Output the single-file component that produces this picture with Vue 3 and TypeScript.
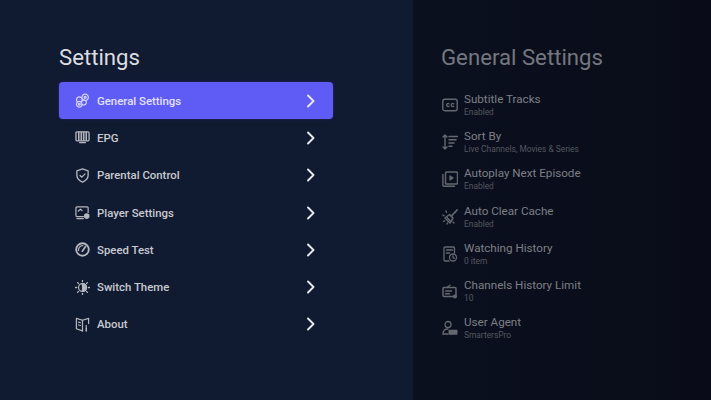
<script setup lang="ts">
interface MenuItem { label: string; icon: string }
interface DetailItem { label: string; sub: string; icon: string }

const menu: MenuItem[] = [
  { label: 'General Settings', icon: 'general' },
  { label: 'EPG', icon: 'epg' },
  { label: 'Parental Control', icon: 'shield' },
  { label: 'Player Settings', icon: 'player' },
  { label: 'Speed Test', icon: 'speed' },
  { label: 'Switch Theme', icon: 'theme' },
  { label: 'About', icon: 'about' },
]

const details: DetailItem[] = [
  { label: 'Subtitle Tracks', sub: 'Enabled', icon: 'cc' },
  { label: 'Sort By', sub: 'Live Channels, Movies & Series', icon: 'sort' },
  { label: 'Autoplay Next Episode', sub: 'Enabled', icon: 'autoplay' },
  { label: 'Auto Clear Cache', sub: 'Enabled', icon: 'clear' },
  { label: 'Watching History', sub: '0 item', icon: 'history' },
  { label: 'Channels History Limit', sub: '10', icon: 'limit' },
  { label: 'User Agent', sub: 'SmartersPro', icon: 'agent' },
]
</script>

<template>
  <div class="screen">
    <section class="left">
      <h1 class="title">Settings</h1>
      <ul class="menu">
        <li v-for="(m, i) in menu" :key="m.label" class="row" :class="{ active: i === 0 }">
          <svg class="mi" viewBox="0 0 16 16" fill="none" stroke="currentColor" stroke-width="1.300" stroke-linejoin="round" stroke-linecap="round">
            <g v-if="m.icon === 'general'">
              <circle cx="10.800" cy="4.600" r="3.400" stroke-dasharray="1.700 .5" />
              <circle cx="10.800" cy="4.600" r="1.100" />
              <circle cx="4.600" cy="7.200" r="3" fill="#5f5cf6" stroke-dasharray="1.600 .5" />
              <circle cx="4.600" cy="12" r="3" fill="#5f5cf6" stroke-dasharray="1.600 .5" />
              <circle cx="4.600" cy="12" r="1" />
              <circle cx="9.500" cy="10.200" r="2.600" fill="#5f5cf6" stroke-dasharray="1.500 .5" />
            </g>
            <g v-else-if="m.icon === 'epg'">
              <rect x="1" y="2" width="14" height="9.500" rx="1" stroke-width="1.400" />
              <path d="M4 2.500v8.500M6.700 2.500v8.500M9.300 2.500v8.500M12 2.500v8.500" stroke-width="1.700" />
              <path d="M5 13.500h6" stroke-width="1.500" />
            </g>
            <g v-else-if="m.icon === 'shield'">
              <path d="M8 1l6 2.100v4.600c0 3.500-2.600 5.800-6 7.300-3.400-1.500-6-3.800-6-7.300V3.100z" stroke-width="1.400" />
              <path d="M5.400 8l1.900 1.800 3.400-3.500" stroke-width="1.300" />
            </g>
            <g v-else-if="m.icon === 'player'">
              <path d="M9 12.300H2a1 1 0 0 1-1-1V3a1 1 0 0 1 1-1h11a1 1 0 0 1 1 1v5" stroke-width="1.300" />
              <path d="M3.500 6.500l2.500-2 1.500 1.500" />
              <path d="M2 14.500h7" stroke-width="1.300" />
              <circle cx="12.500" cy="11.800" r="3" fill="currentColor" stroke="none" />
            </g>
            <g v-else-if="m.icon === 'speed'">
              <circle cx="8" cy="8" r="6.700" stroke-width="2" />
              <path d="M7.800 9.800L11.200 4.800" stroke-width="1.800" />
              <path d="M3.800 9a4.300 4.300 0 0 1 4.600-5" />
            </g>
            <g v-else-if="m.icon === 'theme'">
              <circle cx="8" cy="8" r="4.200" stroke-width="1.300" />
              <path d="M8 3.800a4.200 4.200 0 0 1 0 8.400z" fill="currentColor" />
              <path d="M8 .6v1.200M8 14.200v1.200M.6 8h1.200M14.200 8h1.200M2.800 2.800l.9.9M12.300 12.300l.9.9M2.800 13.200l.9-.9M12.300 3.700l.9-.9" stroke-width="1.400" />
            </g>
            <g v-else>
              <path d="M8 3.500L1.500 1.500v11L8 14.800" stroke-width="1.300" />
              <path d="M8 3.500l6.500-2V7" stroke-width="1.300" />
              <path d="M8 3.500v11.300M3.800 5.500l2 .6M3.800 8.500l2 .6" />
              <path d="M12 9.300v.5M12 11.500v3.300" stroke-width="1.600" />
            </g>
          </svg>
          <span class="label">{{ m.label }}</span>
          <svg class="chev" viewBox="0 0 10 14" fill="none" stroke="currentColor" stroke-width="1.900" stroke-linecap="round" stroke-linejoin="round">
            <path d="M2 1.500L7.500 7 2 12.500" />
          </svg>
        </li>
      </ul>
    </section>
    <section class="right">
      <h2 class="heading">General Settings</h2>
      <ul class="details">
        <li v-for="d in details" :key="d.label" class="drow">
          <svg class="di" viewBox="0 0 16 16" fill="none" stroke="currentColor" stroke-width="1.300" stroke-linejoin="round" stroke-linecap="round">
            <g v-if="d.icon === 'cc'">
              <rect x=".8" y="2.300" width="14.400" height="11.400" rx="2" stroke-width="1.400" />
              <path d="M7 6.800a1.500 1.500 0 1 0 0 2.400M11.700 6.800a1.500 1.500 0 1 0 0 2.400" stroke-width="1.300" />
            </g>
            <g v-else-if="d.icon === 'sort'">
              <path d="M3 1v14M1 3l2-2 2 2M1 13l2 2 2-2" stroke-width="1.400" />
              <path d="M7 2.500h8.500M7 5.800h7M7 9h5M7 12.300h3" stroke-width="1.500" />
            </g>
            <g v-else-if="d.icon === 'autoplay'">
              <path d="M.9 3.500v10.700a1 1 0 0 0 1 1h10.600" stroke-width="1.400" />
              <rect x="3.500" y="1" width="12" height="12" rx="1" stroke-width="1.400" />
              <path d="M8 5l3 2-3 2z" fill="currentColor" />
            </g>
            <g v-else-if="d.icon === 'clear'">
              <path d="M15 1L9.500 7" stroke-width="1.800" />
              <path d="M7.500 5.500l3.500 3.500-3 5-5-5z" stroke-width="1.500" />
              <path d="M5 8.500l3 3" />
              <path d="M1 6l1 .8M4 2l.5 1.300M1.500 12.500l1-.6M5 15l.6-1M11 13l1 1" stroke-width="1.400" />
            </g>
            <g v-else-if="d.icon === 'history'">
              <path d="M7 15H3a1 1 0 0 1-1-1V2a1 1 0 0 1 1-1h8.500a1 1 0 0 1 1 1v5" stroke-width="1.300" />
              <path d="M4.500 4h6M4.500 7h3" stroke-width="1.500" />
              <circle cx="11" cy="11.500" r="3.500" stroke-width="1.300" />
              <path d="M11 9.800v1.900l1.200.7" />
            </g>
            <g v-else-if="d.icon === 'limit'">
              <rect x="1" y="4.500" width="13" height="9" rx="1" stroke-width="1.500" />
              <path d="M3.500 8h6M3.500 10.800h4" stroke-width="1.500" />
              <path d="M5 4.500L8 2.200" />
              <circle cx="13" cy="13.500" r="2" fill="currentColor" stroke="none" />
            </g>
            <g v-else>
              <circle cx="6" cy="4.500" r="3" stroke-width="1.300" />
              <path d="M1 14c0-3.200 2-5 5-5" stroke-width="1.300" />
              <path d="M1 14h5" stroke-width="1.300" />
              <rect x="6.500" y="9.800" width="9" height="5" rx=".8" fill="currentColor" stroke="none" />
            </g>
          </svg>
          <div class="text">
            <div class="dlabel">{{ d.label }}</div>
            <div class="dsub">{{ d.sub }}</div>
          </div>
        </li>
      </ul>
    </section>
  </div>
</template>

<style>
html, body { margin: 0; background: #0a0d1a; }
</style>

<style scoped>
.screen {
  width: 711px;
  height: 400px;
  display: flex;
  overflow: hidden;
  font-family: Roboto, "Liberation Sans", sans-serif;
}
.left {
  width: 413px;
  box-sizing: border-box;
  padding: 44px 80px 0 59px;
  background: #101a30;
}
.title {
  margin: 0 0 11px;
  font-size: 22.200px;
  line-height: 27px;
  font-weight: 400;
  color: #dcdde1;
}
.menu, .details { list-style: none; margin: 0; padding: 0; }
.row {
  height: 37.300px;
  display: flex;
  align-items: center;
  padding: 0 17px 0 16px;
  border-radius: 4px;
  color: #c8cad0;
}
.row.active {
  background: #5f5cf6;
  color: #e2e2fc;
  box-shadow: 0 0 3px rgba(60, 60, 180, .5);
}
.mi { width: 15px; height: 15px; flex: none; margin-right: 7px; color: #b5b7bf; }
.active .mi { color: #d4d4fb; }
.label { flex: 1; font-size: 11.400px; font-weight: 500; }
.chev { width: 10px; height: 14px; color: #e6e8ec; }
.right {
  flex: 1;
  box-sizing: border-box;
  padding: 44px 0 0 28px;
  background: linear-gradient(90deg, #0b101f 0%, #090c18 100%);
}
.heading {
  margin: 0 0 15px;
  font-size: 22.200px;
  line-height: 27px;
  font-weight: 400;
  color: #74777e;
}
.drow {
  height: 37.300px;
  display: flex;
  align-items: center;
}
.di { width: 16px; height: 16px; flex: none; margin: 0 6px 0 1px; color: #65686f; }
.text { display: flex; flex-direction: column; }
.dlabel { font-size: 11.650px; line-height: 14px; color: #7d7f85; }
.dsub { font-size: 8.400px; line-height: 11px; color: #54575f; margin-top: 1px; }
</style>
